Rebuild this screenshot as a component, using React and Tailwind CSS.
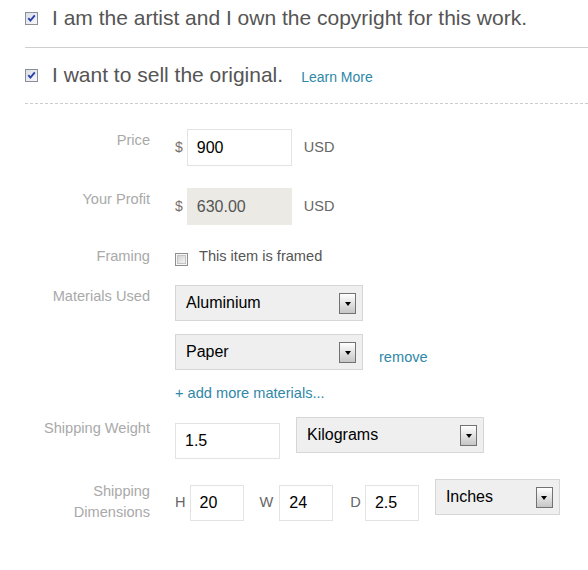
const CheckedBox = () => (
  <svg width="13" height="13" viewBox="0 0 13 13" className="shrink-0">
    <defs>
      <linearGradient id="cbOn" x1="0" y1="0" x2="1" y2="1">
        <stop offset="0" stopColor="#d9dde6" />
        <stop offset="1" stopColor="#f7f8fb" />
      </linearGradient>
    </defs>
    <rect x="0.5" y="0.5" width="12" height="12" fill="url(#cbOn)" stroke="#8d8f96" />
    <path d="M3.3 6.2 L5.4 8.6 L9.8 3.4" stroke="#2a3fae" strokeWidth="1.9" fill="none" />
  </svg>
);

const EmptyBox = () => (
  <svg width="13" height="13" viewBox="0 0 13 13" className="shrink-0">
    <defs>
      <linearGradient id="cbOff" x1="0" y1="0" x2="1" y2="1">
        <stop offset="0" stopColor="#cfcfcf" />
        <stop offset="1" stopColor="#f6f6f6" />
      </linearGradient>
    </defs>
    <rect x="0.5" y="0.5" width="12" height="12" fill="#f7f7f7" stroke="#8e8e8e" />
    <rect x="2.5" y="2.5" width="8" height="8" fill="url(#cbOff)" stroke="#c4c4c4" />
  </svg>
);

const Select = ({ value, width }) => (
  <div
    className={`flex h-[36px] shrink-0 items-center justify-between border border-[#d6d6d6] bg-[#efefef] pl-[10px] pr-[6px] text-[16px] text-black ${width}`}
  >
    <span>{value}</span>
    <span className="flex h-[21px] w-[17px] items-center justify-center border border-[#727272] bg-gradient-to-b from-white to-[#c6c6c6]">
      <span className="mt-[1px] h-0 w-0 border-x-[3px] border-t-[4px] border-x-transparent border-t-black" />
    </span>
  </div>
);

const Field = ({ value, width, grey }) => (
  <input
    readOnly
    value={value}
    className={`h-[36px] shrink-0 border px-[9px] text-[16px] outline-none font-['Liberation_Sans',Arial,sans-serif] ${width} ${
      grey ? "border-[#ebeae5] bg-[#ebeae5] text-[#555]" : "border-[#e3e3e3] bg-white text-black"
    }`}
  />
);

const Label = ({ children, className = "" }) => (
  <div
    className={`mr-[25px] w-[125px] shrink-0 text-right text-[14.6px] text-[#a9a9a9] ${className}`}
  >
    {children}
  </div>
);

export default function App() {
  return (
    <div className="min-h-screen bg-white pl-[25px] font-['Liberation_Sans',Arial,sans-serif]">
      <div className="flex items-center border-b border-[#cfcfcf] pt-[6px] pb-[17px]">
        <CheckedBox />
        <span className="ml-[14px] text-[21px] leading-[24px] text-[#555]">
          I am the artist and I own the copyright for this work.
        </span>
      </div>

      <div className="flex items-center border-b border-dashed border-[#cccccc] pt-[15px] pb-[16px]">
        <CheckedBox />
        <span className="ml-[14px] text-[21px] leading-[24px] text-[#555]">
          I want to sell the original.
          <a className="ml-[18px] text-[14px] leading-none text-[#2f88a7]">Learn More</a>
        </span>
      </div>

      <div className="pt-[25px]">
        <div className="flex items-start">
          <Label className="pt-[3px] leading-[17px]">Price</Label>
          <div className="flex items-center">
            <span className="mr-[4px] text-[14px] text-[#7a7068]">$</span>
            <Field value="900" width="w-[105px] h-[37px]" />
            <span className="ml-[12px] text-[14.5px] text-[#666]">USD</span>
          </div>
        </div>

        <div className="mt-[22px] flex items-start">
          <Label className="pt-[3px] leading-[17px]">Your Profit</Label>
          <div className="flex items-center">
            <span className="mr-[4px] text-[14px] text-[#7a7068]">$</span>
            <Field value="630.00" width="w-[105px] h-[37px]" grey />
            <span className="ml-[12px] text-[14.5px] text-[#666]">USD</span>
          </div>
        </div>

        <div className="mt-[20px] flex items-start">
          <Label className="pt-[3px] leading-[17px]">Framing</Label>
          <div className="flex items-start">
            <span className="mt-[8px]">
              <EmptyBox />
            </span>
            <span className="ml-[11px] pt-[3px] text-[14.6px] leading-[17px] text-[#555]">
              This item is framed
            </span>
          </div>
        </div>

        <div className="mt-[19px] flex items-start">
          <Label className="pt-[3px] leading-[17px]">Materials Used</Label>
          <div className="flex flex-col">
            <Select value="Aluminium" width="w-[188px]" />
            <div className="mt-[13px] flex items-start">
              <Select value="Paper" width="w-[188px]" />
              <a className="ml-[16px] mt-[15px] text-[14.6px] leading-[17px] text-[#2f88a7]">
                remove
              </a>
            </div>
            <a className="mt-[15px] text-[14.6px] leading-[17px] text-[#2f88a7]">
              + add more materials...
            </a>
          </div>
        </div>

        <div className="mt-[15px] flex items-start">
          <Label className="pt-[3px] leading-[17px]">Shipping Weight</Label>
          <div className="flex items-start">
            <div className="mt-[6px]">
              <Field value="1.5" width="w-[105px]" />
            </div>
            <div className="ml-[16px]">
              <Select value="Kilograms" width="w-[188px]" />
            </div>
          </div>
        </div>

        <div className="mt-[20px] flex items-start">
          <Label className="pt-[2px] leading-[21px]">
            Shipping
            <br />
            Dimensions
          </Label>
          <div className="flex items-start">
            <div className="mt-[6px] flex items-center">
              <span className="mr-[4px] text-[14.6px] text-[#666]">H</span>
              <Field value="20" width="w-[54px]" />
            </div>
            <div className="ml-[16px] mt-[6px] flex items-center">
              <span className="mr-[6px] text-[14.6px] text-[#666]">W</span>
              <Field value="24" width="w-[54px]" />
            </div>
            <div className="ml-[17px] mt-[6px] flex items-center">
              <span className="mr-[4px] text-[14.6px] text-[#666]">D</span>
              <Field value="2.5" width="w-[54px]" />
            </div>
            <div className="ml-[16px]">
              <Select value="Inches" width="w-[125px]" />
            </div>
          </div>
        </div>
      </div>
    </div>
  );
}
